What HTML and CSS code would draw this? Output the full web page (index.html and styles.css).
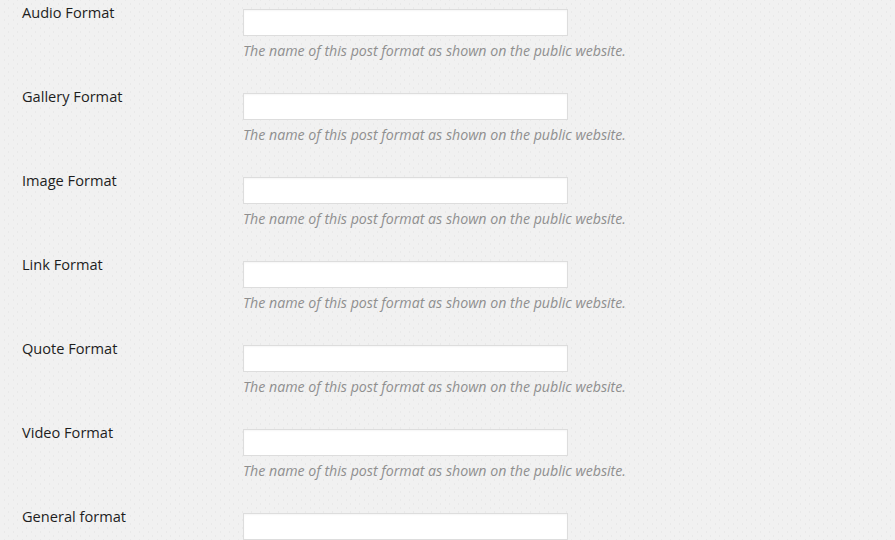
FILE: index.html
```html
<!DOCTYPE html>
<html lang="en">
<head>
    <meta charset="UTF-8">
    <meta name="viewport" content="width=device-width, initial-scale=1.0">
    <title>Post Format Names</title>
    <link rel="stylesheet" href="styles.css">
</head>
<body>
    <div class="form-table">
        <div class="row">
            <label class="row-label" for="fmt-audio">Audio Format</label>
            <div class="row-field">
                <input type="text" id="fmt-audio" class="regular-text">
                <p class="description">The name of this post format as shown on the public website.</p>
            </div>
        </div>
        <div class="row">
            <label class="row-label" for="fmt-gallery">Gallery Format</label>
            <div class="row-field">
                <input type="text" id="fmt-gallery" class="regular-text">
                <p class="description">The name of this post format as shown on the public website.</p>
            </div>
        </div>
        <div class="row">
            <label class="row-label" for="fmt-image">Image Format</label>
            <div class="row-field">
                <input type="text" id="fmt-image" class="regular-text">
                <p class="description">The name of this post format as shown on the public website.</p>
            </div>
        </div>
        <div class="row">
            <label class="row-label" for="fmt-link">Link Format</label>
            <div class="row-field">
                <input type="text" id="fmt-link" class="regular-text">
                <p class="description">The name of this post format as shown on the public website.</p>
            </div>
        </div>
        <div class="row">
            <label class="row-label" for="fmt-quote">Quote Format</label>
            <div class="row-field">
                <input type="text" id="fmt-quote" class="regular-text">
                <p class="description">The name of this post format as shown on the public website.</p>
            </div>
        </div>
        <div class="row">
            <label class="row-label" for="fmt-video">Video Format</label>
            <div class="row-field">
                <input type="text" id="fmt-video" class="regular-text">
                <p class="description">The name of this post format as shown on the public website.</p>
            </div>
        </div>
        <div class="row">
            <label class="row-label" for="fmt-general">General format</label>
            <div class="row-field">
                <input type="text" id="fmt-general" class="regular-text">
            </div>
        </div>
    </div>
</body>
</html>
```
FILE: styles.css
```css
* {
    margin: 0;
    padding: 0;
    box-sizing: border-box;
}

html, body {
    height: 100%;
}

body {
    font-family: 'Open Sans', 'Liberation Sans', sans-serif;
    font-size: 14px;
    color: #222;
    background-color: #f1f1f1;
    background-image:
        radial-gradient(circle, #e9e9e9 0.7px, transparent 1.1px),
        radial-gradient(circle, #e9e9e9 0.7px, transparent 1.1px);
    background-size: 9px 8px;
    background-position: 0 0, 4px 4px;
    overflow: hidden;
}

.form-table {
    padding-left: 22px;
}

.row {
    display: flex;
    height: 84px;
    padding-top: 9px;
}

.row-label {
    width: 221px;
    flex-shrink: 0;
    font-size: 14.6px;
    line-height: 1.3;
    margin-top: -6px;
    color: #1e1e1e;
}

.row-field {
    display: flex;
    flex-direction: column;
}

.regular-text {
    width: 325px;
    height: 27px;
    border: 1px solid #ddd;
    background: #fff;
    box-shadow: inset 0 1px 2px rgba(0, 0, 0, 0.04);
    font-family: inherit;
    font-size: 14px;
    padding: 3px 5px;
}

.regular-text:focus {
    outline: none;
    border-color: #5b9dd9;
}

.description {
    margin-top: 4px;
    font-size: 14.2px;
    font-style: italic;
    line-height: 1.5;
    color: #8f8f8f;
}
```
